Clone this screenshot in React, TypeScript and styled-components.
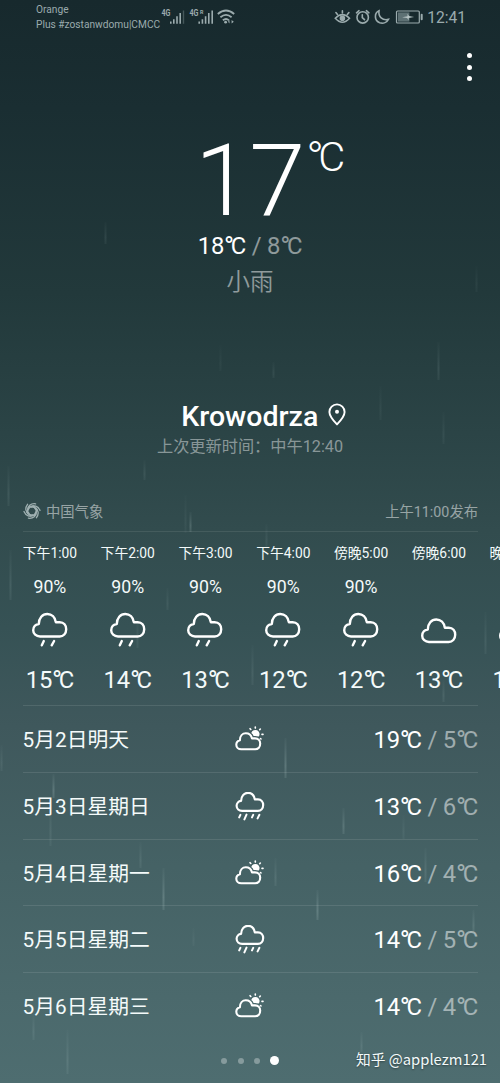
import React from "react";
import styled, { createGlobalStyle } from "styled-components";

const GlobalStyle = createGlobalStyle`
  *, *::before, *::after { box-sizing: border-box; }
  body { margin: 0; background: #17292d; }
`;

const Screen = styled.main`
  position: relative;
  width: 500px;
  height: 1083px;
  overflow: hidden;
  display: flex;
  flex-direction: column;
  color: #f4fafa;
  font-family: Roboto, "Noto Sans CJK SC", sans-serif;
  white-space: nowrap;
  background: linear-gradient(180deg, #17292d 0%, #1a2e32 10%, #22393b 27%, #2b4446 40%, #324c4e 49%, #365255 58%, #3f585c 67%, #456265 80%, #4b696c 92%, #4e6d70 100%);
`;

const RainLayer = styled.svg`
  position: absolute;
  inset: 0;
  pointer-events: none;
`;

const StatusBar = styled.header`
  position: relative;
  height: 34px;
  padding: 3px 34px 0 36px;
  display: flex;
  align-items: flex-start;
  color: #9babad;
`;

const Carrier = styled.div`
  width: 124px;
  font-size: 10.2px;
  line-height: 14.5px;
`;

const Signals = styled.svg`
  margin-left: 1px;
  margin-top: 4px;
`;

const StatusIcons = styled.svg`
  margin-left: auto;
  margin-top: 4px;
`;

const Clock = styled.time`
  margin-left: 4px;
  font-size: 15.6px;
  line-height: 30px;
`;

const Toolbar = styled.div`
  position: relative;
  height: 66px;
  padding: 19px 28px 0 0;
  display: flex;
  justify-content: flex-end;
`;

const MenuButton = styled.button`
  width: 6px;
  height: 28px;
  padding: 0;
  border: 0;
  background: none;
  display: flex;
  flex-direction: column;
  justify-content: space-between;
  align-items: center;
`;

const MenuDot = styled.span`
  width: 5px;
  height: 5px;
  border-radius: 50%;
  background: #fff;
`;

const Current = styled.section`
  position: relative;
  height: 200px;
  display: flex;
  flex-direction: column;
  align-items: center;
`;

const CurrentTemp = styled.div`
  height: 131px;
  padding-left: 40px;
  display: flex;
  color: #fff;
`;

const BigNumber = styled.span`
  font-size: 101px;
  font-weight: 320;
  line-height: 161px;
  letter-spacing: -1.5px;
`;

const BigUnit = styled.span`
  margin-top: 35px;
  margin-left: 2.5px;
  font-size: 41.5px;
  font-weight: 320;
  line-height: 44px;
`;

const DegreeSign = styled.span`
  font-size: 1.13em;
  line-height: 0;
  letter-spacing: -0.125em;
  vertical-align: -0.07em;
`;

const Range = styled.div<{ $size: number }>`
  font-size: ${(p) => p.$size}px;
  line-height: 30px;
  letter-spacing: -0.2px;
  color: #fff;
`;

const Low = styled.span`
  color: rgba(255, 255, 255, 0.5);
`;

const Condition = styled.div`
  margin-top: 4px;
  font-size: 23.5px;
  font-weight: 350;
  line-height: 34px;
  color: rgba(255, 255, 255, 0.5);
`;

const Place = styled.section`
  position: relative;
  height: 190px;
  padding-top: 99px;
  display: flex;
  flex-direction: column;
  align-items: center;
`;

const PlaceName = styled.h1`
  margin: 0;
  padding-left: 27px;
  display: flex;
  align-items: center;
  gap: 9.5px;
  font-size: 28.5px;
  font-weight: 500;
  line-height: 36px;
  color: #fff;
`;

const Updated = styled.p`
  margin: 1px 0 0;
  font-size: 16.2px;
  line-height: 22px;
  color: rgba(255, 255, 255, 0.45);
`;

const Source = styled.div`
  position: relative;
  height: 42px;
  margin: 0 22px 0 23px;
  display: flex;
  align-items: center;
  justify-content: space-between;
  font-size: 14.3px;
  color: rgba(255, 255, 255, 0.5);
  border-bottom: 1px solid rgba(255, 255, 255, 0.09);
`;

const Provider = styled.span`
  display: flex;
  align-items: center;
  gap: 5px;
`;

const Hourly = styled.section`
  position: relative;
  height: 173px;
  padding-left: 11px;
  display: flex;
`;

const Hour = styled.div`
  flex: 0 0 77.8px;
  display: flex;
  flex-direction: column;
  align-items: center;
`;

const HourLabel = styled.span`
  height: 42px;
  font-size: 13.8px;
  line-height: 42px;
`;

const Chance = styled.span`
  height: 26px;
  font-size: 17.7px;
  line-height: 26px;
`;

const HourIcon = styled.span`
  height: 58px;
  display: flex;
  align-items: center;
`;

const HourTemp = styled.span`
  font-size: 23.8px;
  line-height: 44px;
  letter-spacing: -0.2px;
`;

const Daily = styled.ul`
  position: relative;
  margin: 0 22px 0 22.5px;
  padding: 0;
  list-style: none;
`;

const Day = styled.li`
  height: 66.75px;
  padding-top: 2.5px;
  display: grid;
  grid-template-columns: 1fr 30px 1fr;
  align-items: center;
  border-top: 1px solid rgba(255, 255, 255, 0.1);
`;

const DayName = styled.span`
  font-size: 20.8px;
  font-weight: 390;
  line-height: 30px;
`;

const DayRange = styled(Range)`
  text-align: right;
`;

const Footer = styled.footer`
  position: relative;
  height: 44px;
  padding: 0 13px 0 221px;
  display: flex;
  align-items: center;
  justify-content: space-between;
`;

const Pager = styled.div`
  display: flex;
  align-items: center;
  gap: 10.7px;
`;

const PageDot = styled.span<{ $active?: boolean }>`
  width: ${(p) => (p.$active ? 9 : 6)}px;
  height: ${(p) => (p.$active ? 9 : 6)}px;
  margin-left: ${(p) => (p.$active ? -1.5 : 0)}px;
  border-radius: 50%;
  background: ${(p) => (p.$active ? "#fff" : "rgba(255,255,255,0.32)")};
`;

const Watermark = styled.span`
  margin-bottom: 3px;
  font-family: "Noto Sans CJK SC", sans-serif;
  font-size: 14.75px;
  line-height: 24px;
  text-shadow: 0 1px 2px rgba(0, 0, 0, 0.4);
`;

const streaks: [number, number, number, number][] = [
  [105, 222, 22, 0.08], [10, 550, 50, 0.1], [8, 466, 40, 0.09], [144, 460, 20, 0.08], [190, 512, 20, 0.16],
  [185, 495, 38, 0.05], [273, 362, 16, 0.07], [380, 386, 34, 0.05], [438, 342, 38, 0.09], [443, 412, 32, 0.06],
  [476, 266, 26, 0.05], [266, 524, 24, 0.07], [167, 588, 22, 0.07], [137, 618, 30, 0.07], [252, 645, 40, 0.08],
  [485, 612, 42, 0.08], [443, 680, 22, 0.09], [285, 738, 40, 0.18], [53, 774, 24, 0.18], [50, 800, 46, 0.08],
  [343, 808, 26, 0.15], [403, 815, 24, 0.06], [140, 842, 26, 0.09], [163, 868, 42, 0.18], [275, 858, 28, 0.1],
  [425, 848, 34, 0.1], [317, 890, 30, 0.18], [473, 910, 22, 0.12], [361, 1032, 20, 0.1], [67, 1030, 44, 0.1],
  [193, 928, 18, 0.05], [1, 745, 26, 0.08], [220, 345, 26, 0.04], [33, 1014, 26, 0.09],
];

const Rain = () => (
  <RainLayer width="500" height="1083" viewBox="0 0 500 1083">
    <defs>
      <linearGradient id="drop" x1="0" y1="0" x2="0" y2="1">
        <stop offset="0" stopColor="#cfe6e4" stopOpacity="0.15" />
        <stop offset="0.7" stopColor="#cfe6e4" />
        <stop offset="1" stopColor="#cfe6e4" stopOpacity="0.6" />
      </linearGradient>
    </defs>
    {streaks.map(([x, y, h, o], i) => (
      <rect key={i} x={x - 0.5} y={y} width="2" height={h} fill="url(#drop)" opacity={o * 1.1} />
    ))}
  </RainLayer>
);

const CLOUD = "M8.3 24.5C4.5 24.5 1.5 21.8 1.5 18.2C1.5 14.8 4 12.3 7.1 12C7.1 6.2 10.8 2 15.6 2C20 2 23.4 5.2 24.1 10.2H28C32.3 10.2 34.5 13.5 34.5 17.2C34.5 21.4 31.7 24.5 28 24.5Z";

const CloudIcon = ({ rain = false }: { rain?: boolean }) => (
  <svg width="36" height="35" viewBox="0 0 36 35" fill="none" stroke="#fff" strokeWidth="2.4" strokeLinejoin="round" strokeLinecap="round">
    <path d={CLOUD} transform={rain ? "translate(-0.3 0)" : "translate(-0.3 5.5)"} />
    {rain && <path d="M11.8 29L9.8 33.3M22.1 29L19.7 33.3" />}
  </svg>
);

const ShowerIcon = () => (
  <svg width="30" height="30" viewBox="0 0 30 30" fill="none" stroke="#fff" strokeWidth="2" strokeLinecap="round" strokeLinejoin="round">
    <g transform="translate(0.2 -1)">
      <path d={CLOUD} transform="translate(0.2 0.2) scale(0.805)" strokeWidth="2.7" />
      <path d="M5.2 23.8L4 26.4M11.3 23.6L9.2 28.4M18 23.8L16.8 26.4M24.2 23.8L22.4 27.4" />
    </g>
  </svg>
);

const PartlyIcon = () => (
  <svg width="30" height="28" viewBox="0 0 30 28" fill="none" stroke="#fff" strokeWidth="2.1" strokeLinecap="round" strokeLinejoin="round">
    <path d="M6.3 23.3C3.3 23.3 1.3 21.4 1.3 18.7C1.3 16.5 3 14.7 4.9 14.2C4.9 10 7.5 7.3 10.8 7.3C14 7.3 16.2 9.2 17 12.4H20C23.4 12.4 25.2 14.8 25.2 17.6C25.2 21 23.2 23.3 20.2 23.3Z" />
    <path d="M16.3 6.9A4.2 4.2 0 1 1 23.7 10.6C21.8 9.8 20.4 9.9 18.6 10C18.1 8.7 17.4 7.7 16.3 6.9Z" fill="#fff" stroke="none" />
    <path d="M20.3 1.1V2.1M25.3 3L24.7 3.7M28 8.4H27M15.1 2.7L15.8 3.5M25.5 12.5L26 13" strokeWidth="1.6" />
  </svg>
);

const PinShape = styled.svg`
  margin-bottom: 5px;
`;

const PinIcon = () => (
  <PinShape width="18" height="23" viewBox="0 0 18 23" fill="none" stroke="#fff" strokeWidth="1.9" strokeLinejoin="round">
    <path d="M9 21.4C5.5 17.8 1.4 13.4 1.4 9A7.6 7.6 0 0 1 16.6 9C16.6 13.4 12.5 17.8 9 21.4Z" />
    <circle cx="9" cy="8.8" r="2" fill="#fff" stroke="none" />
  </PinShape>
);

const SwirlIcon = () => (
  <svg width="18" height="18" viewBox="-9 -9 18 18" fill="none" stroke="#9fb0b1" strokeLinecap="round">
    {[0, 60, 120, 180, 240, 300].map((a) => (
      <path key={a} d="M-3.8 -1C-4.6 -4.6 -1.4 -7.8 3.6 -7.2M-3.8 -1C-3.2 -3.2 -1 -5 1.6 -5" transform={`rotate(${a})`} strokeWidth="1.3" />
    ))}
  </svg>
);

const SignalIcons = () => (
  <Signals width="76" height="22" viewBox="161 7 76 22" fill="#9babad">
    <g fontFamily="Roboto, sans-serif" fontWeight="700">
      <text x="161.5" y="16" fontSize="9" textLength="9" lengthAdjust="spacingAndGlyphs">4G</text>
      <text x="189.5" y="16" fontSize="9" textLength="9" lengthAdjust="spacingAndGlyphs">4G</text>
      <text x="200" y="14" fontSize="6" textLength="3.4" lengthAdjust="spacingAndGlyphs">R</text>
    </g>
    <path d="M170 21.5h1.6v2.3H170zM173 19.3h1.6v4.5H173zM176.2 16.3h1.6v7.5h-1.6zM179.4 13h1.6v10.8h-1.6z" />
    <path d="M182.8 10.5h1.4v13.3h-1.4z" opacity="0.35" />
    <path d="M198.4 21.5h1.6v2.3h-1.6zM201.6 19.3h1.6v4.5h-1.6zM204.8 16.3h1.6v7.5h-1.6zM208 13h1.6v10.8H208zM211.4 10.5h1.6v13.3h-1.6z" />
    <g fill="none" stroke="#9babad" strokeWidth="1.8">
      <path d="M217.8 14Q226 7 234.2 14M220.4 17.3Q226 12.4 231.6 17.3M222.9 20.3Q226 17.6 229 20.3" />
    </g>
    <circle cx="225.6" cy="22.2" r="1.4" />
    <path d="M228 21.8l1.5-1.8v3.6zM233.8 21.8l-2.2-1.8v3.6z" />
  </Signals>
);

const SystemIcons = () => (
  <StatusIcons width="90" height="22" viewBox="333.3 7 90 22" fill="none" stroke="#9babad" strokeWidth="1.6" strokeLinecap="round">
    <path d="M335.6 18.3Q342.7 10.9 349.8 18.3Q342.7 26.3 335.6 18.3Z" />
    <circle cx="342.7" cy="18.3" r="2" fill="#9babad" />
    <path d="M342.7 13V10.8M337.8 14.6L336.2 12.6M347.6 14.6L349.2 12.6" />
    <circle cx="363" cy="17.4" r="5.7" />
    <path d="M362.6 14.8V17.6L364.8 19.6M356.8 12.8L359.3 10.7M369.2 12.8L366.7 10.7" />
    <path d="M379.3 10.8C374.3 13 374.5 20.8 380 22.7C383.8 23.9 387.3 22.3 388.7 19.4C382.8 20.8 378.4 16.7 379.3 10.8Z" />
    <rect x="396.8" y="11" width="22.8" height="12" rx="1" strokeWidth="1.2" />
    <rect x="398.2" y="12.4" width="11.5" height="9.2" fill="#5e7174" stroke="none" />
    <path d="M402.4 17.2L407.8 16.3V13.8L409.3 16.1L414.4 16.9L409 18V20.3L407.4 17.9Z" fill="#b6c3c4" stroke="none" />
    <path d="M422 14.7V19.3" strokeWidth="2" />
  </StatusIcons>
);

const hours = [
  { label: "下午1:00", chance: "90%", temp: 15 },
  { label: "下午2:00", chance: "90%", temp: 14 },
  { label: "下午3:00", chance: "90%", temp: 13 },
  { label: "下午4:00", chance: "90%", temp: 12 },
  { label: "傍晚5:00", chance: "90%", temp: 12 },
  { label: "傍晚6:00", chance: "", temp: 13 },
  { label: "晚上7:00", chance: "", temp: 12 },
];

const days = [
  { name: "5月2日明天", rain: false, high: 19, low: 5 },
  { name: "5月3日星期日", rain: true, high: 13, low: 6 },
  { name: "5月4日星期一", rain: false, high: 16, low: 4 },
  { name: "5月5日星期二", rain: true, high: 14, low: 5 },
  { name: "5月6日星期三", rain: false, high: 14, low: 4 },
];

const Degrees = ({ value }: { value?: number }) => (
  <>
    {value}
    <DegreeSign>°</DegreeSign>C
  </>
);

export default function App() {
  return (
    <Screen>
      <GlobalStyle />
      <Rain />
      <StatusBar>
        <Carrier>
          Orange
          <br />
          Plus #zostanwdomu|CMCC
        </Carrier>
        <SignalIcons />
        <SystemIcons />
        <Clock>12:41</Clock>
      </StatusBar>
      <Toolbar>
        <MenuButton aria-label="菜单">
          <MenuDot />
          <MenuDot />
          <MenuDot />
        </MenuButton>
      </Toolbar>
      <Current>
        <CurrentTemp>
          <BigNumber>17</BigNumber>
          <BigUnit>
            <Degrees />
          </BigUnit>
        </CurrentTemp>
        <Range $size={23.8}>
          <Degrees value={18} />
          <Low>
            {" / "}
            <Degrees value={8} />
          </Low>
        </Range>
        <Condition>小雨</Condition>
      </Current>
      <Place>
        <PlaceName>
          Krowodrza
          <PinIcon />
        </PlaceName>
        <Updated>上次更新时间：中午12:40</Updated>
      </Place>
      <Source>
        <Provider>
          <SwirlIcon />
          中国气象
        </Provider>
        <span>上午11:00发布</span>
      </Source>
      <Hourly>
        {hours.map((h) => (
          <Hour key={h.label}>
            <HourLabel>{h.label}</HourLabel>
            <Chance>{h.chance}</Chance>
            <HourIcon>
              <CloudIcon rain={h.chance !== ""} />
            </HourIcon>
            <HourTemp>
              <Degrees value={h.temp} />
            </HourTemp>
          </Hour>
        ))}
      </Hourly>
      <Daily>
        {days.map((d) => (
          <Day key={d.name}>
            <DayName>{d.name}</DayName>
            {d.rain ? <ShowerIcon /> : <PartlyIcon />}
            <DayRange $size={23.8}>
              <Degrees value={d.high} />
              <Low>
                {" / "}
                <Degrees value={d.low} />
              </Low>
            </DayRange>
          </Day>
        ))}
      </Daily>
      <Footer>
        <Pager>
          <PageDot />
          <PageDot />
          <PageDot />
          <PageDot $active />
        </Pager>
        <Watermark>知乎 @applezm121</Watermark>
      </Footer>
    </Screen>
  );
}
